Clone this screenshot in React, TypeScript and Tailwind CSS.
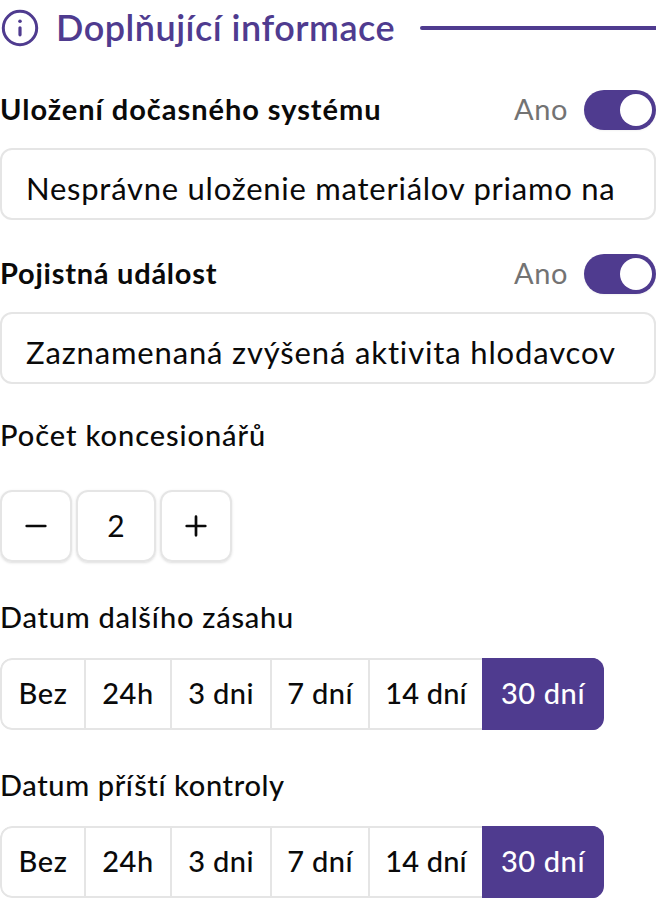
import { useState } from "react"
import clsx from "clsx"

const terms = [
  { label: "Bez", width: "w-[86px]", tracking: "tracking-[0.6px]" },
  { label: "24h", width: "w-[86px]", tracking: "tracking-[0.6px]" },
  { label: "3 dni", width: "w-[100px]", tracking: "tracking-[0.4px]" },
  { label: "7 dní", width: "w-[98px]", tracking: "tracking-[0.4px]" },
  { label: "14 dní", width: "w-[112px]", tracking: "tracking-[0.2px]" },
  { label: "30 dní", width: "w-[122px]", tracking: "tracking-[0.6px]" },
]

function InfoIcon() {
  return (
    <svg width="40" height="40" viewBox="0 0 40 40" fill="none" className="shrink-0">
      <circle cx="20" cy="20" r="16.7" stroke="currentColor" strokeWidth="3" />
      <circle cx="20" cy="13.3" r="1.8" fill="currentColor" />
      <path d="M20 19.8v7" stroke="currentColor" strokeWidth="3.2" strokeLinecap="round" />
    </svg>
  )
}

function ToggleField({ label, tracking, value, valueTracking }: { label: string; tracking: string; value: string; valueTracking: string }) {
  const [on, setOn] = useState(true)

  return (
    <div>
      <div className="flex h-10 items-center justify-between">
        <span className={clsx("whitespace-nowrap pb-0.5 font-bold", tracking)}>{label}</span>
        <div className="flex items-center gap-4">
          <span className="pb-0.5 text-[#737373] tracking-[0.6px]">{on ? "Ano" : "Ne"}</span>
          <button
            type="button"
            role="switch"
            aria-checked={on}
            onClick={() => setOn(!on)}
            className={clsx("flex h-10 w-[72px] items-center rounded-full p-1 shadow-xs", on ? "justify-end bg-[#4f3b8f]" : "bg-neutral-200")}
          >
            <span className="size-8 rounded-full bg-white" />
          </button>
        </div>
      </div>
      <div className="mt-[18px] flex h-[72px] items-center overflow-hidden rounded-xl border-2 border-[#e5e5e5] px-6 pt-2">
        <span className={clsx("whitespace-nowrap text-[31px]", valueTracking)}>{value}</span>
      </div>
    </div>
  )
}

function Counter() {
  const [count, setCount] = useState(2)
  const box = "flex h-[72px] items-center justify-center rounded-xl border-2 border-[#e5e5e5] shadow-sm"

  return (
    <div className="mt-[34px] flex gap-1">
      <button type="button" aria-label="minus" onClick={() => setCount(count - 1)} className={clsx(box, "w-[72px]")}>
        <svg width="32" height="32" viewBox="0 0 32 32" stroke="currentColor" strokeWidth="2.7" strokeLinecap="round">
          <path d="M6.7 16h18.6" />
        </svg>
      </button>
      <div className={clsx(box, "w-20 pb-0.5 text-[30px] font-normal")}>{count}</div>
      <button type="button" aria-label="plus" onClick={() => setCount(count + 1)} className={clsx(box, "w-[72px]")}>
        <svg width="32" height="32" viewBox="0 0 32 32" stroke="currentColor" strokeWidth="2.7" strokeLinecap="round">
          <path d="M6.7 16h18.6M16 6.7v18.6" />
        </svg>
      </button>
    </div>
  )
}

function TermPicker() {
  const [selected, setSelected] = useState(5)

  return (
    <div className="mt-5 flex h-[72px] w-[604px] overflow-hidden rounded-xl">
      {terms.map((term, idx) => (
        <button
          key={term.label}
          type="button"
          onClick={() => setSelected(idx)}
          className={clsx(
            "shrink-0 whitespace-nowrap border-y-2 pb-0.5 font-medium",
            term.width,
            term.tracking,
            idx === 0 && "rounded-l-xl border-l-2",
            idx < 4 && "border-r-2",
            idx === selected ? "border-[#4f3b8f] bg-[#4f3b8f] text-white" : "border-[#e5e5e5]",
          )}
        >
          {term.label}
        </button>
      ))}
    </div>
  )
}

export default function App() {
  return (
    <div className="h-[898px] w-[656px] overflow-hidden bg-white font-['Lato',sans-serif] text-[29px] leading-10 text-[#0a0a0a]">
      <div className="flex h-14 items-center text-[#4f3b8f]">
        <InfoIcon />
        <h2 className="ml-4 w-[364px] whitespace-nowrap pb-0.5 text-[36px] font-semibold tracking-[0.5px]">Doplňující informace</h2>
        <span className="h-1 flex-1 rounded-l-full bg-[#4f3b8f]" />
      </div>

      <div className="mt-[34px] flex flex-col gap-[34px]">
        <ToggleField label="Uložení dočasného systému" tracking="tracking-[0.95px]" value="Nesprávne uloženie materiálov priamo na" valueTracking="tracking-[0.75px]" />
        <ToggleField label="Pojistná událost" tracking="tracking-[0.75px]" value="Zaznamenaná zvýšená aktivita hlodavcov" valueTracking="tracking-[0.85px]" />
      </div>

      <div className="mt-8 font-medium">
        <p className="flex h-10 items-center pb-0.5 tracking-[0.93px]">Počet koncesionářů</p>
        <Counter />
      </div>

      <div className="mt-9 font-medium">
        <p className="flex h-10 items-center pb-0.5 tracking-[0.74px]">Datum dalšího zásahu</p>
        <TermPicker />
      </div>

      <div className="mt-9 font-medium">
        <p className="flex h-10 items-center pb-0.5 tracking-[0.62px]">Datum příští kontroly</p>
        <TermPicker />
      </div>
    </div>
  )
}
